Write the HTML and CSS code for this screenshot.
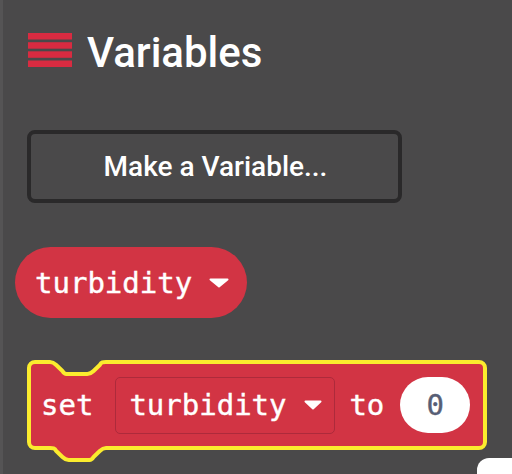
FILE: index.html
```html
<!DOCTYPE html>
<html>
<head>
	<meta charset="utf-8">
	<title>Variables</title>
	<link rel="stylesheet" href="styles.css">
</head>
<body>
	<div class="flyout">
		<div class="heading">
			<svg class="heading-icon" width="44" height="34" viewBox="0 0 44 34">
				<rect x="0" y="0" width="44" height="6.5"/>
				<rect x="0" y="9.2" width="44" height="6.5"/>
				<rect x="0" y="18.3" width="44" height="6.5"/>
				<rect x="0" y="27.5" width="44" height="6.5"/>
			</svg>
			<span>Variables</span>
		</div>

		<button class="make-var">Make a Variable...</button>

		<div class="var-pill">
			<span class="mono">turbidity</span>
			<svg class="caret" width="20" height="10" viewBox="0 0 20 10">
				<polygon points="1.5,1.5 18.5,1.5 10,8.5"/>
			</svg>
		</div>

		<div class="set-block">
			<!-- block outline, selected (yellow) -->
			<svg class="block-shape" width="456" height="86" viewBox="0 0 456 86">
				<path d="M0,6 a6,6 0 0 1 6,-6 H21
					c3.11,0 4.67,1.5 6.22,3 l6.22,6 c1.56,3 3.11,3 6.22,3 h18.67
					c3.11,0 4.67,-1.5 6.22,-3 l6.22,-6 c1.56,-3 3.11,-3 6.22,-3
					H450 a6,6 0 0 1 6,6 V80 a6,6 0 0 1 -6,6 H77
					c-3.11,0 -4.67,1.5 -6.22,3 l-6.22,6 c-1.56,3 -3.11,3 -6.22,3 h-18.67
					c-3.11,0 -4.67,-1.5 -6.22,-3 l-6.22,-6 c-1.56,-3 -3.11,-3 -6.22,-3
					H6 a6,6 0 0 1 -6,-6 Z"/>
			</svg>
			<div class="block-row">
				<span class="mono">set</span>
				<div class="field-dropdown">
					<span class="mono">turbidity</span>
					<svg class="caret" width="18" height="10" viewBox="0 0 18 10">
						<polygon points="1.5,1.5 16.5,1.5 9,8.5"/>
					</svg>
				</div>
				<span class="mono to">to</span>
				<div class="field-number mono">0</div>
			</div>
		</div>
	</div>
	<div class="next-block"></div>
</body>
</html>
```

FILE: styles.css
```css
html, body {
	background: #4a494a;
	height: 100%;
	margin: 0;
	overflow: hidden;
	padding: 0;
}
body {
	box-shadow: inset 3px 0 0 #555455;
	position: relative;
}
.flyout {
	align-items: flex-start;
	display: flex;
	flex-direction: column;
	padding-top: 26px;
}
.heading {
	align-items: center;
	color: #fff;
	display: flex;
	font: 500 42px Roboto, "Liberation Sans", sans-serif;
	gap: 15px;
	height: 48px;
	margin-left: 28px;
}
.heading span {
	position: relative;
	top: 2px;
}
.heading-icon {
	fill: #d92b41;
}
.make-var {
	background: transparent;
	border: 4px solid #2a292a;
	border-radius: 8px;
	box-sizing: border-box;
	color: #fff;
	font: 500 28px Roboto, "Liberation Sans", sans-serif;
	height: 73px;
	margin: 56px 0 0 27px;
	padding: 0 0 0 2px;
	width: 375px;
}
.mono {
	-webkit-text-stroke: 0.4px #fff;
	color: #fff;
	font: 29px "DejaVu Sans Mono", "Liberation Mono", monospace;
}
.caret {
	fill: #fff;
	stroke: #fff;
	stroke-linejoin: round;
	stroke-width: 2;
}
.var-pill {
	align-items: center;
	background: #d23444;
	border-radius: 36px;
	box-sizing: border-box;
	display: flex;
	gap: 17px;
	height: 71px;
	margin: 44px 0 0 15px;
	padding: 0 18px 0 20px;
}
.set-block {
	height: 86px;
	margin: 44px 0 0 29px;
	position: relative;
	width: 456px;
}
.block-shape {
	fill: #d23444;
	left: 0;
	overflow: visible;
	position: absolute;
	stroke: #fbec2e;
	stroke-width: 4;
	top: 0;
}
.block-row {
	align-items: center;
	display: flex;
	height: 100%;
	padding-left: 12px;
	position: relative;
}
.field-dropdown {
	align-items: center;
	border: 1px solid #ad2a3b;
	border-radius: 5px;
	box-sizing: border-box;
	display: flex;
	gap: 17px;
	height: 57px;
	margin-left: 22px;
	padding-left: 13px;
	width: 220px;
}
.to {
	margin-left: 14px;
}
.field-number {
	-webkit-text-stroke: 0.4px #575e75;
	align-items: center;
	background: #fff;
	border-radius: 28px;
	color: #575e75;
	display: flex;
	height: 56px;
	justify-content: center;
	margin-left: 16px;
	width: 70px;
}
.next-block {
	background: #fff;
	border-top-left-radius: 12px;
	bottom: 0;
	height: 16px;
	position: absolute;
	right: 0;
	width: 35px;
}
```
